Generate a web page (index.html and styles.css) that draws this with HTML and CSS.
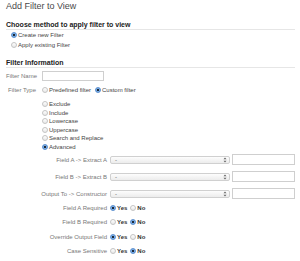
FILE: index.html
```html
<!DOCTYPE html>
<html lang="en">
<head>
    <meta charset="UTF-8">
    <meta name="viewport" content="width=device-width, initial-scale=1.0">
    <title>Add Filter to View</title>
    <link rel="stylesheet" href="styles.css">
</head>
<body>
    <h1 class="page-title">Add Filter to View</h1>

    <h2 class="section-title">Choose method to apply filter to view</h2>
    <div class="method-list">
        <label class="option"><input type="radio" name="method" checked> Create new Filter</label>
        <label class="option"><input type="radio" name="method"> Apply existing Filter</label>
    </div>

    <h2 class="section-title info-title">Filter Information</h2>

    <div class="row name-row">
        <span class="label">Filter Name</span>
        <input type="text" class="text-input name-input">
    </div>

    <div class="row type-row">
        <span class="label">Filter Type</span>
        <label class="option inline"><input type="radio" name="ftype"> Predefined filter</label>
        <label class="option inline"><input type="radio" name="ftype" checked> Custom filter</label>
    </div>

    <div class="custom-list">
        <label class="option"><input type="radio" name="custom"> Exclude</label>
        <label class="option"><input type="radio" name="custom"> Include</label>
        <label class="option"><input type="radio" name="custom"> Lowercase</label>
        <label class="option"><input type="radio" name="custom"> Uppercase</label>
        <label class="option"><input type="radio" name="custom"> Search and Replace</label>
        <label class="option"><input type="radio" name="custom" checked> Advanced</label>
    </div>

    <div class="fields">
        <div class="row field-row">
            <span class="label wide">Field A -&gt; Extract A</span>
            <div class="select"><span>-</span>
                <svg class="arrows" width="4" height="6" viewBox="0 0 4 6"><path d="M0.5 2.3 L2 0.6 L3.5 2.3 Z M0.5 3.7 L2 5.4 L3.5 3.7 Z" fill="#666"/></svg>
            </div>
            <input type="text" class="text-input field-input">
        </div>
        <div class="row field-row">
            <span class="label wide">Field B -&gt; Extract B</span>
            <div class="select"><span>-</span>
                <svg class="arrows" width="4" height="6" viewBox="0 0 4 6"><path d="M0.5 2.3 L2 0.6 L3.5 2.3 Z M0.5 3.7 L2 5.4 L3.5 3.7 Z" fill="#666"/></svg>
            </div>
            <input type="text" class="text-input field-input">
        </div>
        <div class="row field-row">
            <span class="label wide">Output To -&gt; Constructor</span>
            <div class="select"><span>-</span>
                <svg class="arrows" width="4" height="6" viewBox="0 0 4 6"><path d="M0.5 2.3 L2 0.6 L3.5 2.3 Z M0.5 3.7 L2 5.4 L3.5 3.7 Z" fill="#666"/></svg>
            </div>
            <input type="text" class="text-input field-input">
        </div>
    </div>

    <div class="yesno-list">
        <div class="row yesno-row">
            <span class="label wide">Field A Required</span>
            <label class="option inline yn"><input type="radio" name="areq" checked> Yes</label>
            <label class="option inline yn"><input type="radio" name="areq"> No</label>
        </div>
        <div class="row yesno-row">
            <span class="label wide">Field B Required</span>
            <label class="option inline yn"><input type="radio" name="breq"> Yes</label>
            <label class="option inline yn"><input type="radio" name="breq" checked> No</label>
        </div>
        <div class="row yesno-row">
            <span class="label wide">Override Output Field</span>
            <label class="option inline yn"><input type="radio" name="over" checked> Yes</label>
            <label class="option inline yn"><input type="radio" name="over"> No</label>
        </div>
        <div class="row yesno-row">
            <span class="label wide">Case Sensitive</span>
            <label class="option inline yn"><input type="radio" name="case"> Yes</label>
            <label class="option inline yn"><input type="radio" name="case" checked> No</label>
        </div>
    </div>
</body>
</html>
```

FILE: styles.css
```css
* {
    margin: 0;
    padding: 0;
    box-sizing: border-box;
    font-family: "Liberation Sans", Arial, sans-serif;
}

body {
    width: 300px;
    padding: 0 5px 0 6px;
    background: #fff;
    color: #444;
    font-size: 6px;
}

.page-title {
    font-size: 9px;
    font-weight: normal;
    line-height: 12px;
    color: #4a4a4a;
}

.section-title {
    margin-top: 8px;
    font-size: 7px;
    font-weight: bold;
    line-height: 9px;
    color: #222;
    border-bottom: 1px solid #e6e6e6;
}

.method-list {
    padding-left: 5px;
}

.option {
    display: flex;
    align-items: center;
    height: 10px;
    color: #444;
    white-space: nowrap;
}

.option input[type="radio"] {
    appearance: none;
    -webkit-appearance: none;
    width: 6px;
    height: 6px;
    margin-right: 1px;
    border: 1px solid #c4c4c4;
    border-radius: 50%;
    background: linear-gradient(#fff, #e8e8e8);
    flex-shrink: 0;
}

.option input[type="radio"]:checked {
    border-color: #5b8fcf;
    background: radial-gradient(circle, #1d2a3a 0, #1d2a3a 1px, #7fb0e6 1.4px, #5d97da 100%);
}

.row {
    display: flex;
    align-items: center;
}

.label {
    width: 30px;
    margin-right: 6px;
    text-align: right;
    color: #777;
    white-space: nowrap;
}

.label.wide {
    width: 101px;
    margin-right: 3px;
}

.text-input {
    height: 10px;
    border: 1px solid #cfcfcf;
    background: #fff;
}

.name-row {
    margin-top: 3px;
}

.name-input {
    width: 62px;
}

.type-row {
    margin-top: 4px;
    height: 10px;
}

.option.inline {
    display: inline-flex;
    margin-right: 4px;
}

.custom-list {
    margin-top: 5px;
    padding-left: 36px;
}

.custom-list .option {
    height: 8.5px;
}

.fields {
    display: flex;
    flex-direction: column;
    gap: 6px;
    margin-top: 3px;
}

.field-row {
    height: 11px;
}

.select {
    display: flex;
    align-items: center;
    justify-content: space-between;
    width: 120px;
    height: 8px;
    margin-right: 2px;
    padding: 0 2px 0 4px;
    border: 1px solid #d0d0d0;
    border-radius: 2px;
    background: linear-gradient(#fdfdfd, #ececec);
    color: #555;
}

.field-input {
    width: 63px;
    height: 11px;
}

.yesno-list {
    margin-top: 2px;
}

.yesno-row {
    height: 14.3px;
}

.option.yn {
    font-weight: bold;
    color: #333;
    margin-right: 3px;
}
```
